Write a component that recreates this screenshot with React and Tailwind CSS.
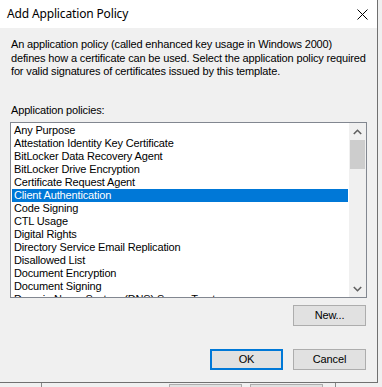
import React from "react";

const items = [
  "Any Purpose",
  "Attestation Identity Key Certificate",
  "BitLocker Data Recovery Agent",
  "BitLocker Drive Encryption",
  "Certificate Request Agent",
  "Client Authentication",
  "Code Signing",
  "CTL Usage",
  "Digital Rights",
  "Directory Service Email Replication",
  "Disallowed List",
  "Document Encryption",
  "Document Signing",
  "Domain Name System (DNS) Server Trust",
];

function Btn({ children, def }) {
  return (
    <div
      className={
        "w-[73px] h-[21px] flex items-center justify-center bg-[#e1e1e1] text-black " +
        (def ? "border-2 border-[#0078d7]" : "border border-[#adadad]")
      }
    >
      {children}
    </div>
  );
}

export default function App() {
  return (
    <div
      className="w-[382px] h-[387px] bg-[#f0f0f0] overflow-hidden flex flex-col"
      style={{ fontFamily: '"Liberation Sans", Arial, sans-serif' }}
    >
      <div className="w-[378px] h-[383px] shrink-0 border-r border-b border-[#707070] flex flex-col">
        <div className="h-[28px] bg-white flex items-center justify-between pl-[7px] pr-[9px] shrink-0">
          <span
            className="text-[12px] text-black tracking-[-0.15px]"
            style={{ fontFamily: '"Noto Sans", "Open Sans", sans-serif' }}
          >
            Add Application Policy
          </span>
          <svg width="11" height="11" viewBox="0 0 11 11">
            <path d="M0.5 0.5 L10.5 10.5 M10.5 0.5 L0.5 10.5" stroke="#000" strokeWidth="1" />
          </svg>
        </div>
        <div className="flex-1 pl-[10px] pr-[10px] text-[11px] text-black tracking-[-0.15px]">
          <p className="mt-[10px] pl-[1px] leading-[13.5px] whitespace-nowrap">
            An application policy (called enhanced key usage in Windows 2000)
            <br />
            defines how a certificate can be used. Select the application policy required
            <br />
            for valid signatures of certificates issued by this template.
          </p>
          <div className="mt-[25.5px] pl-[1px] leading-[13px]">Application policies:</div>
          <div className="mt-[5px] w-[357px] h-[176px] border border-[#828790] bg-white flex">
            <div className="w-[338px] px-[1px] pt-[1px] overflow-hidden">
              {items.map((it) => {
                const sel = it === "Client Authentication";
                return (
                  <div
                    key={it}
                    className={
                      "h-[13px] leading-[13px] pl-[2px] whitespace-nowrap " +
                      (sel ? "bg-[#0078d7] text-white" : "text-black")
                    }
                  >
                    {it}
                  </div>
                );
              })}
            </div>
            <div className="w-[17px] bg-[#f0f0f0] flex flex-col">
              <div className="h-[17px] flex items-center justify-center">
                <svg width="9" height="6" viewBox="0 0 9 6">
                  <path d="M0.8 5 L4.5 1.3 L8.2 5" stroke="#606060" strokeWidth="1.6" fill="none" />
                </svg>
              </div>
              <div className="mx-[1px] h-[29px] bg-[#cdcdcd]" />
              <div className="flex-1" />
              <div className="h-[17px] flex items-center justify-center">
                <svg width="9" height="6" viewBox="0 0 9 6">
                  <path d="M0.8 1 L4.5 4.7 L8.2 1" stroke="#606060" strokeWidth="1.6" fill="none" />
                </svg>
              </div>
            </div>
          </div>
          <div className="mt-[7px] flex justify-end pr-[1px]">
            <Btn>New...</Btn>
          </div>
          <div className="mt-[23px] flex justify-end gap-[10px] pr-[1px]">
            <Btn def>OK</Btn>
            <Btn>Cancel</Btn>
          </div>
        </div>
      </div>
      <div className="h-[4px] flex shrink-0">
        <div className="w-[41px]" />
        <div className="w-[1px] bg-[#8a8a8a]" />
        <div className="w-[127px]" />
        <div className="w-[73px] mt-[1px] border-t border-x border-[#adadad] bg-[#e1e1e1]" />
        <div className="w-[8px]" />
        <div className="w-[73px] mt-[1px] border-t border-x border-[#adadad] bg-[#e1e1e1]" />
        <div className="w-[12px]" />
        <div className="w-[1px] bg-[#8a8a8a]" />
      </div>
    </div>
  );
}
